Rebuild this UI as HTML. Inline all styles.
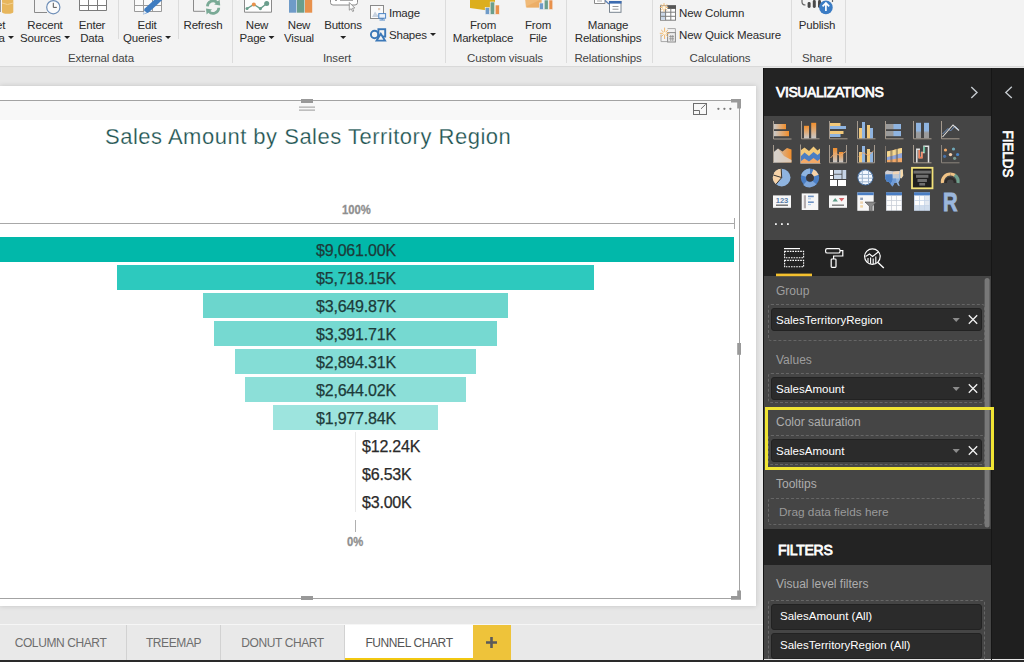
<!DOCTYPE html>
<html><head><meta charset="utf-8">
<style>
*{margin:0;padding:0;box-sizing:border-box}
html,body{width:1024px;height:662px;overflow:hidden;background:#e6e6e6;font-family:"Liberation Sans",sans-serif}
.abs{position:absolute}
#ribbon{position:absolute;left:0;top:0;width:1024px;height:67px;background:#f3f3f3;border-bottom:1px solid #d9d9d9}
.rl{position:absolute;letter-spacing:-0.2px;font-size:11.5px;line-height:13px;color:#2b2b2b;text-align:center;white-space:nowrap;transform:translateX(-50%)}
.rt{position:absolute;letter-spacing:-0.2px;font-size:11.5px;line-height:13px;color:#2b2b2b;white-space:nowrap}
.gl{position:absolute;top:52px;letter-spacing:-0.15px;font-size:11.5px;line-height:13px;color:#444;white-space:nowrap;transform:translateX(-50%)}
.sep{position:absolute;width:1px;background:#dcdcdc;top:0}
.car{display:inline-block;width:0;height:0;border-left:3px solid transparent;border-right:3px solid transparent;border-top:3px solid #222;vertical-align:middle;margin-left:3px;position:relative;top:-1px}
#canvas{position:absolute;left:0;top:68px;width:763px;height:556px;background:#e7e7e7}
#page{position:absolute;left:0;top:86px;width:756px;height:520px;background:#fff;box-shadow:0 0 5px rgba(0,0,0,0.16)}
#tabs{position:absolute;left:0;top:624px;width:763px;height:36px;background:#e9e9e9;border-top:1px solid #f6f6f6}
.tab{position:absolute;top:0;height:35px;font-size:12px;line-height:37px;letter-spacing:-0.4px;color:#6e6e6e;text-align:center;border-right:1px solid #d2d2d2;white-space:nowrap}
#bottom{position:absolute;left:0;top:660px;width:1024px;height:3px;background:#2a2a2a}
#pane{position:absolute;left:764px;top:68px;width:227px;height:591px;background:#454545}
#fields{position:absolute;left:991px;top:68px;width:33px;height:591px;background:#1f1f1f}
.ph{position:absolute;left:0;width:228px;background:#232323}
.wl{position:absolute;left:12px;font-size:12px;color:#adadad;white-space:nowrap;line-height:14px}
.pill{position:absolute;left:7px;width:211px;height:23px;background:#2b2b2b;border-radius:3px;color:#fff;font-size:11.5px;line-height:23px;padding-left:4px;white-space:nowrap;border:1px solid #222}
.well{position:absolute;left:4px;width:217px;border:1px dashed #666;border-radius:3px}
.bar{position:absolute;height:25px}
.dl{position:absolute;-webkit-text-stroke:0.25px currentColor;font-size:16px;line-height:18px;color:#1d3b3a;white-space:nowrap;letter-spacing:-0.2px}
</style></head><body>
<div id="ribbon">
  <div class="sep" style="left:118px;height:39px"></div>
  <div class="sep" style="left:178px;height:39px"></div>
  <div class="sep" style="left:232px;height:63px"></div>
  <div class="sep" style="left:445px;height:63px"></div>
  <div class="sep" style="left:566px;height:63px"></div>
  <div class="sep" style="left:652px;height:63px"></div>
  <div class="sep" style="left:791px;height:63px"></div>
  <div class="sep" style="left:845px;height:63px"></div>
  <div class="rt" style="left:-4px;top:19px">et</div>
  <div class="rt" style="left:-1.5px;top:32px">a<span class="car"></span></div>
  <div class="rl" style="left:45px;top:19px">Recent<br>Sources<span class="car"></span></div>
  <div class="rl" style="left:92px;top:19px">Enter<br>Data</div>
  <div class="rl" style="left:147px;top:19px">Edit<br>Queries<span class="car"></span></div>
  <div class="rl" style="left:203px;top:19px">Refresh</div>
  <div class="rl" style="left:257px;top:19px">New<br>Page<span class="car"></span></div>
  <div class="rl" style="left:299px;top:19px">New<br>Visual</div>
  <div class="rl" style="left:343px;top:19px">Buttons<br><span class="car" style="margin-left:0"></span></div>
  <div class="rt" style="left:389px;top:7px">Image</div>
  <div class="rt" style="left:389px;top:29px">Shapes<span class="car"></span></div>
  <div class="rl" style="left:483px;top:19px">From<br>Marketplace</div>
  <div class="rl" style="left:538px;top:19px">From<br>File</div>
  <div class="rl" style="left:608px;top:19px">Manage<br>Relationships</div>
  <div class="rt" style="left:679px;top:7px;letter-spacing:-0.05px">New Column</div>
  <div class="rt" style="left:679px;top:29px;letter-spacing:-0.08px">New Quick Measure</div>
  <div class="rl" style="left:817px;top:19px">Publish</div>
  <svg class="abs" style="left:0;top:0" width="1024" height="67" viewBox="0 0 1024 67">
  <!-- Get data cylinder -->
  <rect x="0" y="0" width="1" height="12" fill="#999"/>
  <path d="M2 0 V12 Q2 13.8 7.6 13.8 Q13.3 13.8 13.3 12 V0 Z" fill="#e7b65c"/>
  <path d="M2 3 Q7.5 6 13.3 3" stroke="#f3d194" stroke-width="1" fill="none"/>
  <!-- Recent sources -->
  <path d="M34.5 0 V12.5 H47" stroke="#8a8a8a" stroke-width="1" fill="none"/>
  <circle cx="53.3" cy="7.2" r="6.6" fill="#fbfbfb" stroke="#6f8fb8" stroke-width="1.2"/>
  <path d="M53.3 2.8 V7.4 H56.8" stroke="#555" stroke-width="1" fill="none"/>
  <!-- Enter data grid -->
  <path d="M79.5 0 V10.5 H106.5 V0 M79.5 5.5 H106.5 M88.5 0 V10.5 M97.5 0 V10.5" stroke="#7b7b7b" stroke-width="1" fill="#fff"/>
  <!-- Edit queries -->
  <path d="M134.5 0 V11.5 H161.5 V0 M134.5 5.5 H161.5 M143.5 0 V11.5 M152.5 0 V11.5" stroke="#9a9a9a" stroke-width="1" fill="#fafafa"/>
  <path d="M154.2 0 L162.2 0 L148.6 12.4 L143.3 14.5 L144.4 8.8 Z" fill="#3f7cc0"/>
  <path d="M143.3 14.3 L144.3 10.6 L146.8 12.7 Z" fill="#e8eef6"/>
  <!-- Refresh -->
  <path d="M193.5 0 V11.3 H205" stroke="#8a8a8a" stroke-width="1" fill="none"/>
  <g fill="none" stroke="#7aaa96" stroke-width="2.7">
    <path d="M207.4 6.4 A5.7 5.7 0 0 1 217.4 2.8"/>
    <path d="M218.8 7.8 A5.7 5.7 0 0 1 208.8 11.4"/>
  </g>
  <path d="M214.2 4.6 L220.2 5.6 L219.6 -0.4 Z" fill="#7aaa96"/>
  <path d="M212 9.6 L206 8.6 L206.6 14.6 Z" fill="#7aaa96"/>
  <!-- New page -->
  <path d="M244.5 0 V12.2 H271.5 V0" stroke="#8a8a8a" stroke-width="1" fill="#fdfdfd"/>
  <path d="M247 8.6 L253.8 4.4 L260.4 8.6 L266.7 3.5" stroke="#6a9e8c" stroke-width="1.3" fill="none"/>
  <circle cx="247" cy="8.6" r="1.5" fill="#6a9e8c"/>
  <circle cx="253.8" cy="4.4" r="2" fill="#e8914c"/>
  <circle cx="260.4" cy="8.6" r="1.6" fill="#6a9e8c"/>
  <circle cx="266.7" cy="3.5" r="2.5" fill="#6a9e8c"/>
  <!-- New visual -->
  <rect x="289" y="0" width="7.4" height="12.7" fill="#6f9bc8"/>
  <rect x="297" y="0" width="7.4" height="12.7" fill="#6a9e8c"/>
  <rect x="305" y="0" width="7.2" height="12.7" fill="#e8914c"/>
  <!-- Buttons -->
  <path d="M330.5 0 V2.5 Q330.5 5 333 5 H355 Q357.5 5 357.5 2.5 V0" stroke="#8a8a8a" stroke-width="1" fill="#fff"/>
  <rect x="335" y="0" width="2" height="1" fill="#999"/><rect x="340" y="0" width="13" height="1" fill="#aaa"/>
  <path d="M349.3 2.5 L349.3 10.2 L351.2 8.6 L352.6 11.5 L353.8 11 L352.5 8.2 L354.8 8 Z" fill="#fff" stroke="#777" stroke-width="0.7"/>
  <!-- Image -->
  <rect x="370.5" y="5.5" width="13" height="13" fill="#fbfbfb" stroke="#8a8a8a"/>
  <path d="M372 17 L375 11.5 L377.5 15 L378.5 14 L379 17 Z" fill="#c9d3e0"/>
  <rect x="378" y="8" width="2.2" height="2.2" fill="#e5cdb8"/>
  <rect x="378.8" y="13.6" width="6.8" height="4.6" fill="#eaf1fa" stroke="#4d86c6" stroke-width="1"/>
  <path d="M382.2 18.2 V19.8 M379.5 20 H385" stroke="#4d86c6" stroke-width="1"/>
  <!-- Shapes -->
  <circle cx="374.6" cy="34.5" r="3.7" fill="none" stroke="#3b78b8" stroke-width="1.9"/>
  <rect x="378.4" y="29.2" width="6.8" height="7.4" fill="#f3f3f3" stroke="#3b78b8" stroke-width="1.9"/>
  <path d="M380.8 33.8 L376.6 40.6 H385 Z" fill="#f3f3f3" stroke="#3b78b8" stroke-width="1.9" stroke-linejoin="miter"/>
  <!-- From marketplace -->
  <path d="M470 0 H495 V11.6 L470 8 Z" fill="#dcae1d"/>
  <rect x="485.2" y="7.6" width="4.4" height="6.8" fill="#6f9bc8" stroke="#f3f3f3" stroke-width="0.6"/>
  <rect x="490.2" y="2" width="4.4" height="12.4" fill="#6a9e8c" stroke="#f3f3f3" stroke-width="0.6"/>
  <rect x="495.2" y="5" width="4.2" height="9.4" fill="#e8914c" stroke="#f3f3f3" stroke-width="0.6"/>
  <!-- From file -->
  <path d="M525.2 0 H541.5 V7.6 H526 Z" fill="#f0ba78"/>
  <path d="M527 6 L540 0 H541.5 V7.6 H527Z" fill="#e9a65c" opacity="0.6"/>
  <rect x="539.4" y="3" width="4" height="6.6" fill="#6f9bc8" stroke="#f3f3f3" stroke-width="0.6"/>
  <rect x="544.2" y="0" width="4" height="9.6" fill="#6a9e8c" stroke="#f3f3f3" stroke-width="0.6"/>
  <rect x="549" y="0" width="3.8" height="9.6" fill="#e8914c" stroke="#f3f3f3" stroke-width="0.6"/>
  <!-- Manage relationships -->
  <path d="M594.5 0 V3.5 H605 V0" fill="#fff" stroke="#8a8a8a"/>
  <path d="M597 1 H602" stroke="#aaa"/>
  <path d="M605 0.5 L609 4" stroke="#5a7fb5" stroke-width="1.2"/>
  <rect x="609.5" y="1.5" width="11.5" height="10.8" fill="#fff" stroke="#7a8590"/>
  <rect x="609" y="1" width="12.5" height="2.6" fill="#3d6cb0"/>
  <path d="M612.5 6.5 H618.5 M612.5 9.2 H618.5" stroke="#9a9a9a"/>
  <!-- New column -->
  <rect x="660.5" y="5.8" width="15" height="14.4" fill="#fff" stroke="#7d7d7d"/>
  <rect x="661" y="12.4" width="4.6" height="7.4" fill="#c9d6e6"/>
  <path d="M665.6 9 V20.2 M670.8 9 V20.2 M660.5 12.2 H675.5 M660.5 16.3 H675.5" stroke="#7d7d7d"/>
  <rect x="667.4" y="5.3" width="8.6" height="3.6" fill="#555"/>
  <g stroke="#f2b96e" stroke-width="1"><path d="M664 3.2 V11.6 M659.8 7.4 H668.2 M661 4.4 L667 10.4 M667 4.4 L661 10.4"/></g>
  <circle cx="664" cy="7.4" r="1.5" fill="#fff6e3"/>
  <!-- New quick measure -->
  <path d="M661 34.5 V41.6 H667 M667.5 28.6 H675.4 V33" stroke="#a8a8a8" fill="none"/>
  <rect x="667.6" y="32.6" width="7.8" height="9.4" fill="#ededed" stroke="#8a8a8a"/>
  <path d="M669.2 36.6 H674 M669.2 38.8 H674 M670.8 35 V41 M672.8 35 V41" stroke="#8a8a8a" stroke-width="0.8"/>
  <g stroke="#f2b96e" stroke-width="1"><path d="M664.6 27.6 V39 M659.8 33.3 H669.4 M661.2 29.9 L668 36.7 M668 29.9 L661.2 36.7"/></g>
  <circle cx="664.6" cy="33.3" r="1.5" fill="#fff6e3"/>
  <!-- Publish -->
  <path d="M802 0 V2 Q802 5 805.5 5" stroke="#666" stroke-width="1.2" fill="none"/>
  <path d="M832.5 0 V2" stroke="#666" stroke-width="1.2" fill="none"/>
  <rect x="807.6" y="2" width="3" height="6" rx="1.4" fill="#4a4a4a"/>
  <rect x="812.8" y="0" width="3" height="8" rx="1.4" fill="#4a4a4a"/>
  <rect x="818" y="0" width="3" height="8" rx="1.4" fill="#4a4a4a"/>
  <circle cx="825.9" cy="7.4" r="6.8" fill="#3b7cc4"/>
  <path d="M825.9 3.3 V11 M822.6 6.3 L825.9 3 L829.2 6.3" stroke="#fff" stroke-width="1.7" fill="none"/>
</svg>
  <div class="gl" style="left:101px">External data</div>
  <div class="gl" style="left:337px">Insert</div>
  <div class="gl" style="left:505px">Custom visuals</div>
  <div class="gl" style="left:608px">Relationships</div>
  <div class="gl" style="left:720px">Calculations</div>
  <div class="gl" style="left:817px">Share</div>
</div>
<div id="canvas"></div>
<div id="page">
  <!-- visual frame -->
  <div class="abs" style="left:0;top:14px;width:740px;height:499px;border:1px solid #a3a3a3;border-left:none"></div>
  <div class="abs" style="left:0;top:15px;width:739px;height:19px;background:#f8f8f8"></div>
  <svg class="abs" style="left:0;top:0" width="756" height="520" viewBox="0 86 756 520">
    <g fill="#999">
      <rect x="301" y="99" width="12" height="4"/>
      <rect x="299" y="106.6" width="16" height="1"/><rect x="299" y="109.6" width="16" height="1"/>
      <path d="M731 99 H741 V108.6 H737.2 V102.6 H731 Z"/>
      <rect x="737.2" y="343" width="3.8" height="11.8"/>
      <rect x="301" y="596" width="12" height="4"/>
      <path d="M741 590.5 V599.8 H731 V596 H737.2 V590.5 Z"/>
    </g>
    <g fill="none" stroke="#6e6e6e" stroke-width="1">
      <rect x="693.5" y="103.5" width="13" height="11"/>
      <path d="M693.5 110.5 H699.5 V114.5"/>
      <path d="M701 108.8 L705.6 104.4"/>
    </g>
    <circle cx="718.4" cy="108.8" r="1.15" fill="#7a7a7a"/><circle cx="724.4" cy="108.8" r="1.15" fill="#7a7a7a"/><circle cx="730.4" cy="108.8" r="1.15" fill="#7a7a7a"/>
  </svg>
  <div class="abs" id="title" style="left:105px;top:37px;font-size:22px;line-height:28px;color:#1d5351;white-space:nowrap;letter-spacing:0.5px;-webkit-text-stroke:0.25px #fff">Sales Amount by Sales Territory Region</div>
  <div class="abs" style="left:341.5px;top:118px;font-size:12.5px;line-height:12px;font-weight:bold;-webkit-text-stroke:0.3px #8f8f8f;color:#8f8f8f;transform:scaleX(0.9);transform-origin:left">100%</div>
  <div class="abs" style="left:0;top:137px;width:734px;height:1px;background:#a8a8a8"></div>
  <div class="abs" style="left:734px;top:132px;width:1px;height:11px;background:#a8a8a8"></div>
  <div class="bar" style="left:0;top:151px;width:734px;background:#01b8aa"></div>
  <div class="bar" style="left:117px;top:179px;width:477px;background:#2dc9be"></div>
  <div class="bar" style="left:203px;top:207px;width:305px;background:#6cd6cd"></div>
  <div class="bar" style="left:214px;top:235px;width:283px;background:#76d9d1"></div>
  <div class="bar" style="left:235px;top:263px;width:241px;background:#84ddd6"></div>
  <div class="bar" style="left:245px;top:291px;width:221px;background:#8cdfd8"></div>
  <div class="bar" style="left:273px;top:319px;width:165px;background:#9de4de"></div>
  <div class="abs" style="left:355px;top:346px;width:1px;height:80px;background:#e9e9e9"></div>
  <div class="abs" style="left:355px;top:434px;width:1px;height:12px;background:#b0b0b0"></div>
  <div class="dl" style="left:316px;top:156px">$9,061.00K</div>
  <div class="dl" style="left:316px;top:184px">$5,718.15K</div>
  <div class="dl" style="left:316px;top:212px">$3,649.87K</div>
  <div class="dl" style="left:316px;top:240px">$3,391.71K</div>
  <div class="dl" style="left:316px;top:268px">$2,894.31K</div>
  <div class="dl" style="left:316px;top:296px">$2,644.02K</div>
  <div class="dl" style="left:316px;top:324px">$1,977.84K</div>
  <div class="dl" style="left:362px;top:352px;color:#2a2a2a">$12.24K</div>
  <div class="dl" style="left:362px;top:380px;color:#2a2a2a">$6.53K</div>
  <div class="dl" style="left:362px;top:408px;color:#2a2a2a">$3.00K</div>
  <div class="abs" style="left:347px;top:450px;font-size:12.5px;line-height:12px;font-weight:bold;-webkit-text-stroke:0.3px #8f8f8f;color:#8f8f8f;transform:scaleX(0.9);transform-origin:left">0%</div>
</div>
<div id="tabs">
  <div class="tab" style="left:0;width:127px;padding-right:5px">COLUMN CHART</div>
  <div class="tab" style="left:127px;width:94px">TREEMAP</div>
  <div class="tab" style="left:221px;width:124px">DONUT CHART</div>
  <div class="tab" style="left:345px;width:128px;background:#fff;border-right:none;border-bottom:2px solid #f2c811;color:#555">FUNNEL CHART</div>
  <div class="tab" style="left:473px;width:38px;background:#eec33a;border-right:none"><svg width="38" height="35" style="position:absolute;left:0;top:0"><path d="M13 17.5 H24 M18.5 12 V23" stroke="#5a5a5a" stroke-width="2.6"/></svg></div>
</div>
<div id="pane">
  <div class="ph" style="top:0;height:48px"></div>
  <div class="abs" style="left:12px;top:16px;font-size:14px;line-height:16px;color:#fff;-webkit-text-stroke:0.75px #fff;letter-spacing:-0.42px">VISUALIZATIONS</div>
  <div class="ph" style="top:172px;height:36px"></div>
  <div class="wl" style="top:216px;color:#9e9e9e">Group</div>
  <div class="well" style="top:236px;height:37px"></div>
  <div class="pill" style="top:240px">SalesTerritoryRegion</div>
  <div class="wl" style="top:285px;color:#9e9e9e">Values</div>
  <div class="well" style="top:305px;height:30px"></div>
  <div class="pill" style="top:309px">SalesAmount</div>
  <div class="wl" style="top:347px">Color saturation</div>
  <div class="well" style="top:367px;height:30px"></div>
  <div class="pill" style="top:371px">SalesAmount</div>
  <div class="wl" style="top:409px">Tooltips</div>
  <div class="well" style="top:430px;height:27px"></div>
  <div class="wl" style="left:15px;top:437px;color:#9a9a9a;font-size:11.8px">Drag data fields here</div>
  <div class="ph" style="top:461px;height:36px"></div>
  <div class="abs" style="left:14px;top:474px;font-size:14px;line-height:16px;color:#fff;-webkit-text-stroke:0.8px #fff;letter-spacing:-0.3px">FILTERS</div>
  <div class="wl" style="top:509px">Visual level filters</div>
  <div class="well" style="top:532px;height:70px"></div>
  <div class="pill" style="top:536px;height:26px;line-height:23px;padding-left:8px">SalesAmount (All)</div>
  <div class="pill" style="top:565px;height:26px;line-height:23px;padding-left:8px">SalesTerritoryRegion (All)</div>
</div>
<div id="fields">
  <div class="abs" style="left:17.2px;top:85.7px;transform:translate(-50%,-50%) rotate(90deg) scale(0.865,1);font-size:15.5px;-webkit-text-stroke:0.75px #fff;color:#fff;letter-spacing:0px">FIELDS</div>
</div>
<svg class="abs" style="left:763px;top:68px" width="261" height="591" viewBox="763 68 261 591">
<defs>
  <linearGradient id="go" x1="0" y1="0" x2="1" y2="0"><stop offset="0" stop-color="#c9c9c9"/><stop offset="1" stop-color="#f28e2b"/></linearGradient>
  <linearGradient id="gov" x1="0" y1="0" x2="0" y2="1"><stop offset="0" stop-color="#f28e2b"/><stop offset="1" stop-color="#c9c9c9"/></linearGradient>
  <linearGradient id="gb" x1="0" y1="0" x2="1" y2="0"><stop offset="0" stop-color="#9a9a9a"/><stop offset="0.45" stop-color="#9a9a9a"/><stop offset="0.55" stop-color="#8fb4e0"/><stop offset="1" stop-color="#8fb4e0"/></linearGradient>
  <linearGradient id="gbv" x1="0" y1="0" x2="0" y2="1"><stop offset="0" stop-color="#8fb4e0"/><stop offset="0.5" stop-color="#8fb4e0"/><stop offset="0.65" stop-color="#9a9a9a"/><stop offset="1" stop-color="#9a9a9a"/></linearGradient>
</defs>
<!-- header chevrons -->
<path d="M971.3 87 L977 92.5 L971.3 98" stroke="#c4c9ce" stroke-width="1.4" fill="none"/>
<path d="M1011.8 86.8 L1005.8 92.4 L1011.8 98" stroke="#c4c9ce" stroke-width="1.4" fill="none"/>
<g id="r1">
  <!-- 1 stacked bar -->
  <path d="M773.5 121 V139 H791.5" stroke="#a59a8e" fill="none"/>
  <rect x="774" y="124" width="12" height="5.2" fill="url(#go)"/>
  <rect x="774" y="131" width="15" height="5.2" fill="url(#go)"/>
  <!-- 2 stacked column -->
  <path d="M801.5 121 V138.8 H819.5" stroke="#a59a8e" fill="none"/>
  <rect x="804" y="125.8" width="5" height="12.5" fill="url(#gov)"/>
  <rect x="811.2" y="122.8" width="5" height="15.5" fill="url(#gov)"/>
  <!-- 3 clustered bar -->
  <path d="M829.5 121 V138.8 H847.5" stroke="#a59a8e" fill="none"/>
  <rect x="830" y="123" width="10.5" height="3" fill="#f2c97a"/>
  <rect x="830" y="126" width="16" height="3" fill="#8fb4e0"/>
  <rect x="830" y="131" width="13.5" height="3" fill="#f2c97a"/>
  <rect x="830" y="134" width="10.5" height="3" fill="#8fb4e0"/>
  <!-- 4 clustered column -->
  <path d="M857.5 121 V138.8 H875.5" stroke="#a59a8e" fill="none"/>
  <rect x="859" y="128" width="3" height="10.3" fill="#f2c97a"/>
  <rect x="862" y="122" width="3" height="16.3" fill="#8fb4e0"/>
  <rect x="867" y="125" width="3" height="13.3" fill="#f2c97a"/>
  <rect x="870" y="128" width="3" height="10.3" fill="#8fb4e0"/>
  <!-- 5 100% stacked bar -->
  <path d="M885.5 121 V138.8 H903.5" stroke="#a59a8e" fill="none"/>
  <rect x="886" y="124" width="15" height="5.2" fill="url(#gb)"/>
  <rect x="886" y="131" width="15" height="5.2" fill="url(#gb)"/>
  <!-- 6 100% stacked column -->
  <path d="M913.5 121 V138.8 H931.5" stroke="#a59a8e" fill="none"/>
  <rect x="916" y="122.8" width="5" height="15.5" fill="url(#gbv)"/>
  <rect x="924" y="122.8" width="5" height="15.5" fill="url(#gbv)"/>
  <!-- 7 line -->
  <path d="M941.5 121 V138.8 H959.5" stroke="#a59a8e" fill="none"/>
  <path d="M942.5 134 L948 128.5 L950.5 131 L955 126 L958.5 129.5" stroke="#6f93c4" stroke-width="1" fill="none"/>
  <path d="M942.5 137 L949 129.5 L953 125 L955.5 127.5 L959 130.5" stroke="#dedede" stroke-width="1.1" fill="none"/>
</g>
<g id="r2">
  <!-- 8 area -->
  <path d="M773.5 145 V163" stroke="#a59a8e" fill="none"/>
  <path d="M774 152 L778 148.5 L782.5 151.5 L787 148 L791.5 149.5 V162.5 H774 Z" fill="url(#go)"/>
  <path d="M774 152 L778 148.7 L784 156 L791.5 160 V162.5 H774 Z" fill="#d8d2cc" opacity="0.85"/>
  <!-- 9 stacked area -->
  <path d="M800.5 144.5 V163.5 H820.5" stroke="#a59a8e" fill="none"/>
  <path d="M801 150 L804.5 147.5 L809 151 L813.5 146.5 L817.5 150.5 L820 148.5 V163 H801 Z" fill="#f2c97a"/>
  <path d="M801 156 L804.5 152.5 L809 156 L813.5 152 L817.5 155 L820 153 V163 H801 Z" fill="#4a7ec4"/>
  <path d="M801 161 L804.5 158.5 L809 161.5 L813.5 158 L817.5 161 L820 159 V163 H801 Z" fill="#f2a968"/>
  <!-- 10 line & stacked column -->
  <path d="M829.5 145 V162.8 H846.5 V145" stroke="#a59a8e" fill="none"/>
  <rect x="833" y="148" width="4.2" height="14.3" fill="url(#gov)"/>
  <rect x="839" y="152" width="4.2" height="10.3" fill="url(#gov)"/>
  <path d="M830.5 158 L835 153 L840 155.5 L846 151.5" stroke="#f2a968" stroke-width="1" fill="none" opacity="0.9"/>
  <!-- 11 line & clustered column -->
  <path d="M857.5 145 V162.8 H874.5 V145" stroke="#a59a8e" fill="none"/>
  <rect x="859" y="152" width="3" height="10.3" fill="#f2c97a"/>
  <rect x="862" y="146" width="3" height="16.3" fill="#8fb4e0"/>
  <rect x="867" y="149" width="3" height="13.3" fill="#f2c97a"/>
  <rect x="870" y="152" width="3" height="10.3" fill="#8fb4e0"/>
  <path d="M858.5 157 L863 152.5 L868 155.5 L873.5 151" stroke="#f2a968" stroke-width="1" fill="none" opacity="0.8"/>
  <!-- 12 ribbon -->
  <path d="M885.5 146 V163" stroke="#7d746c" fill="none"/>
  <path d="M887 151.5 L902 148 V162.3 H887 Z" fill="#f2a968"/>
  <path d="M887 151.5 L892 150.6 L897 149 L902 148 V153 L897 154.5 L892 156 L887 157 Z" fill="#f5d78f"/>
  <path d="M887 157 L892 156 L897 154.5 L902 153 V158 L897 158.5 L892 159.5 L887 160 Z" fill="#8fa6dc"/>
  <rect x="890.3" y="150" width="2.2" height="12.3" fill="#4d4640" opacity="0.45"/>
  <rect x="895.8" y="149" width="2.2" height="13.3" fill="#4d4640" opacity="0.45"/>
  <!-- 13 waterfall -->
  <path d="M913.5 145 V162.8 H931.5" stroke="#a59a8e" fill="none"/>
  <path d="M916.8 162.5 V149.3 H919.2 V157.5 H921.6 V152.5 H924 V146.3 H928.5 V162.5" stroke="#e3e3e3" stroke-width="1.5" fill="none"/>
  <path d="M919.2 150 V157.8 H922 V152" stroke="#ef7d55" stroke-width="1.5" fill="none"/>
  <path d="M924.3 152.5 V146.5" stroke="#5fbf9a" stroke-width="1.6" fill="none"/>
  <!-- 14 scatter -->
  <path d="M941.5 145 V162.8 H959.5" stroke="#8c857d" fill="none"/>
  <circle cx="945.5" cy="150" r="1.6" fill="#f2a968"/>
  <circle cx="953.5" cy="149" r="1.6" fill="#6fa8b8"/>
  <circle cx="950.5" cy="154.6" r="1.7" fill="#f7d3b0"/>
  <circle cx="957.6" cy="154.5" r="1.6" fill="#4a86c8"/>
  <circle cx="944.6" cy="156.3" r="1.6" fill="#4a72a8"/>
  <circle cx="954.6" cy="158.3" r="1.6" fill="#7a9a90"/>
</g>
<g id="r3">
  <!-- pie -->
  <circle cx="781.7" cy="177.6" r="8.8" fill="#8fb4e0"/>
  <path d="M781.7 177.6 L776 184.3 A8.8 8.8 0 0 1 773.3 175 Z" fill="#f7d3a8"/>
  <path d="M781.7 177.6 L773.3 175 A8.8 8.8 0 0 1 781.2 168.8 Z" fill="#f7d3a8"/>
  <path d="M781.2 168.8 L781.7 177.6 L776 184.3 M781.7 177.6 L773.3 175" stroke="#3a3530" stroke-width="1" fill="none"/>
  <!-- donut -->
  <circle cx="810" cy="177.7" r="6.6" fill="none" stroke="#4a7ec4" stroke-width="5.2"/>
  <path d="M810 171.1 A6.6 6.6 0 0 0 803.6 176" stroke="#8fb4e0" stroke-width="5.2" fill="none"/>
  <path d="M812.5 171.6 A6.6 6.6 0 0 1 816.2 175.6" stroke="#f7d3a8" stroke-width="5.2" fill="none"/>
  <path d="M805 183 A6.6 6.6 0 0 0 814.5 182.6" stroke="#7ea6da" stroke-width="5.2" fill="none"/>
  <circle cx="810" cy="177.7" r="3.6" fill="#3d3a3c"/>
  <!-- treemap -->
  <g fill="#fff">
    <rect x="830" y="170" width="3" height="5"/><rect x="830" y="176" width="3" height="3"/>
    <rect x="830" y="180" width="7" height="6"/><rect x="838" y="180" width="8" height="6"/>
  </g>
  <g fill="#c6d4e6">
    <rect x="834" y="170" width="7.6" height="3.8"/><rect x="834" y="174.6" width="7.6" height="4.4"/>
    <rect x="842.4" y="170" width="3.8" height="9"/>
  </g>
  <!-- globe -->
  <circle cx="865.4" cy="177.4" r="7.6" fill="#f3f8ff" stroke="#3c689e" stroke-width="1"/>
  <path d="M858.5 174.5 H872.3 M858 178.2 H872.8 M859.5 181.8 H871.3 M862.3 170.5 V184.3 M868.5 170.5 V184.3" stroke="#9db4cf" stroke-width="1"/>
  <!-- filled map -->
  <path d="M885.2 172 L887 170.6 L893 171.4 L899.6 171 L900.6 169.8 L902.8 169.6 L903.2 175.5 L901.6 178.2 L900.4 178 L899.6 180.6 L898.4 182.6 L899.8 186.2 L898 185.4 L896.6 182.8 L894.4 183 L892.6 186.4 L890.8 184.4 L889 182 L886.6 181.6 L885 178 Z" fill="#8fb4e0"/>
  <path d="M885.2 172 L887 170.6 L893 171.4 L892.6 174.2 L885.6 174.4 Z" fill="#d4cfcf"/>
  <path d="M885.6 174.4 L892.6 174.2 L892.8 180 L890.6 184.2 L889 182 L886.6 181.6 L885 178 Z" fill="#4a7ec4"/>
  <path d="M893 171.4 L899.6 171 L899.3 174.6 L892.6 174.8 Z" fill="#f2d5b6"/>
  <path d="M892.7 174.8 L899.3 174.6 L899.2 178.4 L892.8 178.4 Z" fill="#c3c9d3"/>
  <path d="M900.4 169.8 L902.8 169.6 L903.2 175.5 L901.6 178.2 L900.4 178 Z" fill="#f7d9a8"/>
  <path d="M892.8 178.4 L896 178.4 L896.4 182.8 L894.4 183 L892.6 186.4 L890.8 184.4 L892.8 180 Z" fill="#6f9bd6"/>
  <!-- funnel selected -->
  <rect x="912" y="167.8" width="20.5" height="20.5" fill="#1f1f1f" stroke="#f2e27a" stroke-width="1.8"/>
  <rect x="913.5" y="170.6" width="17.4" height="3" fill="#6e6e6e"/>
  <rect x="916" y="174.8" width="12.4" height="3" fill="#6e6e6e"/>
  <rect x="917.5" y="179" width="9.4" height="3" fill="#6e6e6e"/>
  <rect x="919.3" y="183" width="5.8" height="2.6" fill="#6e6e6e"/>
  <!-- gauge -->
  <path d="M942.5 183 A7.8 7.8 0 0 1 950.3 174" stroke="#f0c386" stroke-width="3.2" fill="none"/>
  <path d="M950.3 174 A7.8 7.8 0 0 1 955 175.4" stroke="#f0c386" stroke-width="3.2" fill="none"/>
  <path d="M954.6 175.2 A7.8 7.8 0 0 1 958 183" stroke="#6f9f8d" stroke-width="3.2" fill="none"/>
  <path d="M945.6 183 A4.7 4.7 0 0 1 955 183" stroke="#2e2b2a" stroke-width="2.6" fill="none"/>
</g>
<g id="r4">
  <!-- card -->
  <rect x="773" y="195.4" width="18" height="12.4" fill="#f7f7f7"/>
  <text x="782" y="203" font-family="Liberation Sans, sans-serif" font-size="7.6" font-weight="bold" text-anchor="middle" fill="#5b7ea8">123</text>
  <rect x="776" y="204.6" width="12" height="1.1" fill="#444"/>
  <!-- multi-row card -->
  <rect x="801.7" y="193.4" width="16.6" height="16.6" fill="#f7f7f7"/>
  <rect x="803.8" y="195.3" width="2.2" height="13" fill="#b5aeb0"/>
  <rect x="808" y="195.6" width="5.8" height="1.6" fill="#6f93c4"/><rect x="808" y="198.4" width="3" height="0.9" fill="#9fc0e6"/>
  <rect x="808" y="201.4" width="5.8" height="1.6" fill="#6f93c4"/><rect x="808" y="204.2" width="3" height="0.9" fill="#9fc0e6"/>
  <!-- KPI -->
  <rect x="829" y="195.4" width="18" height="12.4" fill="#f7f7f7"/>
  <path d="M832.5 201.6 L835.2 198 L837.9 201.6 Z" fill="#5e9e88"/>
  <path d="M838.8 198 L844.4 198 L841.6 201.6 Z" fill="#d9666a"/>
  <rect x="832" y="204.6" width="12" height="1.1" fill="#555"/>
  <!-- slicer -->
  <rect x="857.3" y="192.4" width="16.4" height="18.4" fill="#f7f7f7"/>
  <rect x="857.3" y="192.4" width="16.4" height="2.8" fill="#4a7ec4"/>
  <rect x="860.2" y="197.6" width="2.8" height="2.4" fill="#8e9eb8"/>
  <rect x="860.2" y="201.4" width="2.8" height="2.4" fill="#ecd4b2"/>
  <rect x="860.2" y="205.2" width="2.8" height="2.4" fill="#f2d7a8"/>
  <path d="M865 202 H876.5 L872.2 206.2 V211.8 L869.4 210.6 V206.2 Z" fill="#8a8a8a" stroke="#454545" stroke-width="0.6"/>
  <!-- table -->
  <rect x="886" y="192.4" width="16" height="18.4" fill="#c9cfd8"/>
  <rect x="886" y="192.4" width="16" height="2.8" fill="#4a7ec4"/>
  <g fill="#fdfdfd">
    <rect x="886.8" y="196" width="4.3" height="4.2"/><rect x="891.9" y="196" width="4.3" height="4.2"/><rect x="897" y="196" width="4.3" height="4.2"/>
    <rect x="886.8" y="201" width="4.3" height="4.2"/><rect x="891.9" y="201" width="4.3" height="4.2"/><rect x="897" y="201" width="4.3" height="4.2"/>
    <rect x="886.8" y="206" width="4.3" height="4.2"/><rect x="891.9" y="206" width="4.3" height="4.2"/><rect x="897" y="206" width="4.3" height="4.2"/>
  </g>
  <!-- matrix -->
  <rect x="914" y="192.4" width="16" height="18.4" fill="#c3d3e6"/>
  <rect x="914" y="192.4" width="16" height="2.8" fill="#4a7ec4"/>
  <g fill="#fdfdfd">
    <rect x="914.8" y="196" width="4.3" height="4.2"/><rect x="919.9" y="196" width="4.3" height="4.2"/>
    <rect x="914.8" y="201" width="4.3" height="4.2"/><rect x="919.9" y="201" width="4.3" height="4.2"/>
  </g>
  <g fill="#e3e9f1"><rect x="925" y="196" width="4.3" height="4.2"/><rect x="925" y="201" width="4.3" height="4.2"/></g>
  <g fill="#cfdcec"><rect x="914.8" y="206" width="4.3" height="4.2"/><rect x="919.9" y="206" width="4.3" height="4.2"/><rect x="925" y="206" width="4.3" height="4.2"/></g>
  <!-- R -->
  <text transform="translate(950.3 210.8) scale(0.84 1.06)" x="0" y="0" font-family="Liberation Sans, sans-serif" font-size="24" font-weight="bold" text-anchor="middle" fill="#9bb6dc" stroke="#9bb6dc" stroke-width="0.9">R</text>
</g>
<!-- dots -->
<rect x="775" y="223.2" width="1.8" height="1.8" fill="#f0f0f0"/><rect x="781" y="223.2" width="1.8" height="1.8" fill="#f0f0f0"/><rect x="787" y="223.2" width="1.8" height="1.8" fill="#f0f0f0"/>
<!-- tab icons -->
<g stroke="#fff" fill="none">
  <path d="M784 248.6 H800" stroke-width="1.2"/>
  <rect x="784.6" y="251.4" width="19" height="6.4" stroke-width="1.1" stroke-dasharray="1.6 1"/>
  <rect x="784.6" y="260.4" width="19" height="6.4" stroke-width="1.1" stroke-dasharray="1.6 1"/>
  <rect x="825.6" y="248.6" width="14.4" height="4.4" rx="1.6" stroke-width="1.2"/>
  <path d="M840 250.6 H842.8 V256 H833.6 V259" stroke-width="1.2"/>
  <rect x="831.2" y="259" width="4.8" height="8.4" rx="0.8" stroke-width="1.2"/>
  <circle cx="872.4" cy="256.6" r="7.8" stroke-width="1.2"/>
  <path d="M878 262.4 L883.8 268" stroke-width="1.4"/>
  <path d="M865.6 256.5 L869.5 254 L872.5 256.5 L878.6 251.8" stroke-width="1.1"/>
  <path d="M868 258 V262.6 M870.6 257.5 V263.8 M873.2 258.6 V264 M875.8 256.5 V263" stroke-width="1.1"/>
</g>
<rect x="776" y="273.6" width="36" height="2.6" fill="#f5c12e"/>
<path d="M952.6 318.0 H959.8 L956.2 322.0 Z" fill="#8c8c8c"/>
<path d="M968.8 315.20000000000005 L977.2 323.8 M977.2 315.20000000000005 L968.8 323.8" stroke="#f2f2f2" stroke-width="1.3" fill="none"/>
<path d="M952.6 387.0 H959.8 L956.2 391.0 Z" fill="#8c8c8c"/>
<path d="M968.8 384.20000000000005 L977.2 392.8 M977.2 384.20000000000005 L968.8 392.8" stroke="#f2f2f2" stroke-width="1.3" fill="none"/>
<path d="M952.6 449.0 H959.8 L956.2 453.0 Z" fill="#8c8c8c"/>
<path d="M968.8 446.20000000000005 L977.2 454.8 M977.2 446.20000000000005 L968.8 454.8" stroke="#f2f2f2" stroke-width="1.3" fill="none"/>
<rect x="984.6" y="278" width="5" height="249.5" rx="2.5" fill="#787878"/>

</svg>
<div class="abs" style="left:765px;top:407px;width:229px;height:63px;border:3px solid #f0e433;z-index:5"></div>
<div class="abs" style="left:763px;top:68px;width:1px;height:592px;background:#141414"></div>
<div class="abs" style="left:991px;top:68px;width:1px;height:592px;background:#161616"></div>
<div id="bottom"></div>
</body></html>
